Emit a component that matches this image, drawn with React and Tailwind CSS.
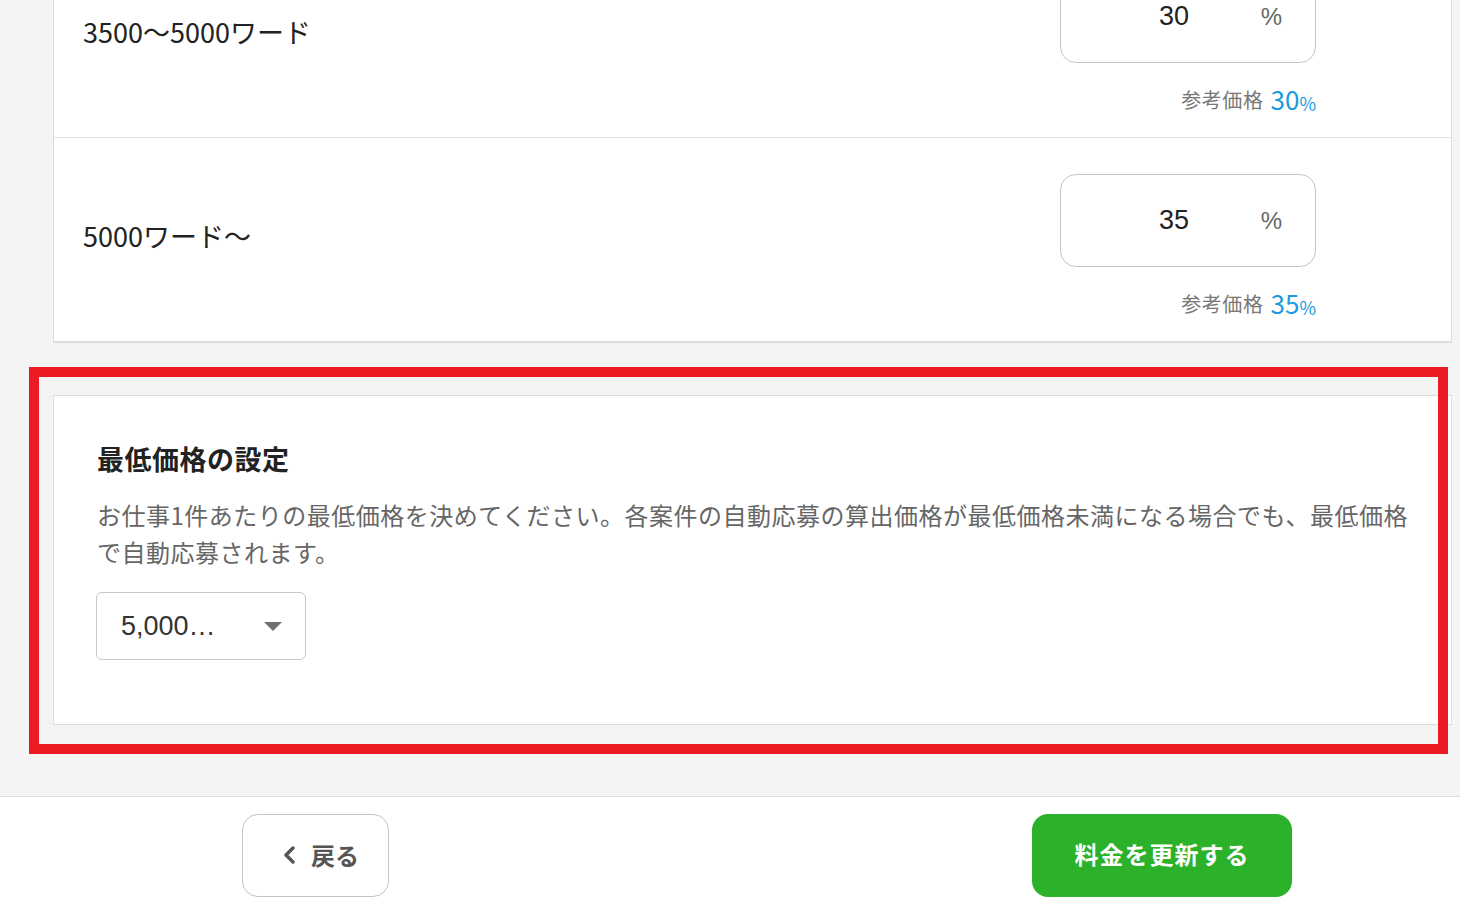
import React from 'react';

const jp = { fontFamily: '"Noto Sans CJK JP", "Noto Sans", sans-serif' };
const num = { fontFamily: '"Liberation Sans", Arial, sans-serif' };

const rates = [
  { label: '3500～5000ワード', value: '30' },
  { label: '5000ワード～', value: '35' },
];

const RateRow = ({ label, value, last }) => (
  <div className={`flex items-center justify-between pl-[29px] pr-[135px] pt-[36px] pb-[25px] ${last ? '' : 'border-b border-[#e2e2e2]'}`}>
    <span className="mb-[18px] text-[27px] text-[#222]" style={jp}>{label}</span>
    <div className="flex flex-col items-end">
      <div className="w-[256px] h-[93px] rounded-[16px] border border-[#c4c4c4] bg-white flex items-center">
        <span className="ml-[83px] w-[60px] text-center text-[27px] text-[#222]" style={num}>{value}</span>
        <span className="ml-auto mr-[33px] text-[24px] text-[#666]" style={num}>%</span>
      </div>
      <div className="mt-[21px] h-[28px] flex items-end leading-none" style={jp}>
        <span className="text-[20px] tracking-[0.6px] text-[#777] mb-[2px]">参考価格</span>
        <span className="ml-[7px] text-[26px] text-[#1b9ae0]">{value}</span>
        <span className="text-[18px] text-[#1b9ae0]">%</span>
      </div>
    </div>
  </div>
);

const App = () => {
  return (
    <div className="w-[1460px] h-[910px] overflow-hidden bg-[#f4f4f4] flex flex-col" style={jp}>
      <div className="ml-[53px] mr-[8px]">
        {/* 単価設定 (scrolled) */}
        <div className="-mt-[67px] bg-white border border-[#dcdcdc] border-b-2">
          {rates.map((r, i) => (
            <RateRow key={r.label} label={r.label} value={r.value} last={i === rates.length - 1} />
          ))}
        </div>

        {/* 最低価格 */}
        <div className="relative mt-[52px] bg-white border border-[#dcdcdc] pl-[43px] pr-[43px] pt-[44px] pb-[64px]">
          <h3 className="text-[27px] leading-[38px] font-bold tracking-[0.5px] text-[#222]">最低価格の設定</h3>
          <p className="mt-[18px] text-[24px] leading-[37px] tracking-[0.5px] text-[#666]">
            お仕事1件あたりの最低価格を決めてください。各案件の自動応募の算出価格が最低価格未満になる場合でも、最低価格
            <br />
            で自動応募されます。
          </p>
          <div className="mt-[22px] -ml-[1px] w-[210px] h-[68px] rounded-[6px] border border-[#c8c8c8] bg-white flex items-center pl-[24px] pr-[23px]">
            <span className="text-[27px] text-[#333]" style={num}>5,000…</span>
            <svg className="ml-auto" width="18" height="9" viewBox="0 0 18 9">
              <polygon points="0,0 18,0 9,9" fill="#707070" />
            </svg>
          </div>
          {/* annotation frame */}
          <div className="absolute -left-[25px] -top-[29px] right-[3px] -bottom-[30px] border-[10px] border-[#ed1c24] pointer-events-none" />
        </div>
      </div>

      {/* footer */}
      <div className="mt-auto h-[114px] bg-white border-t border-[#dcdcdc] flex items-start justify-between pl-[242px] pr-[168px] pt-[17px]">
        <button className="w-[147px] h-[83px] rounded-[16px] border border-[#c4c4c4] bg-white flex items-center justify-center gap-[15px] pl-[10px] pb-[2px] text-[#555]">
          <svg width="14" height="18" viewBox="0 0 14 18">
            <polyline points="11,2 4,9 11,16" fill="none" stroke="#555" strokeWidth="3.4" strokeLinecap="round" strokeLinejoin="round" />
          </svg>
          <span className="text-[24px] font-bold">戻る</span>
        </button>
        <button className="w-[260px] h-[83px] rounded-[16px] bg-[#2cb12a] flex items-center justify-center pb-[3px] text-white text-[24px] font-bold tracking-[1px]">
          料金を更新する
        </button>
      </div>
    </div>
  );
};

export default App;
